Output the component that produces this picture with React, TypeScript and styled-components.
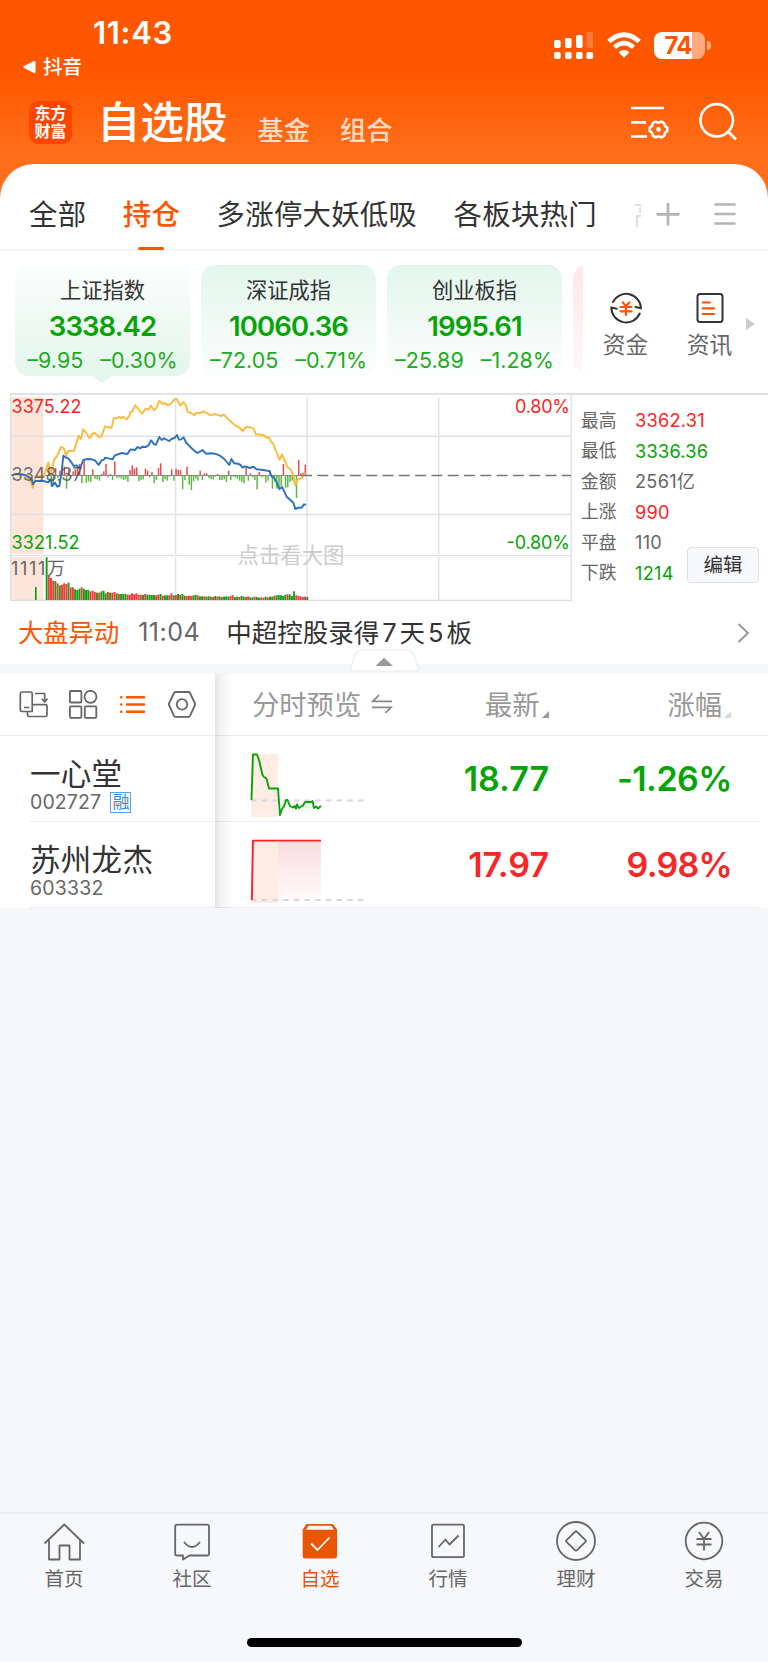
import React from "react";
import styled, { createGlobalStyle, css } from "styled-components";

const GREEN = "#07a307";
const RED = "#f82626";
const ORANGE = "#ff5500";

const GlobalStyle = createGlobalStyle`
  * { box-sizing: border-box; }
  body {
    margin: 0;
    background: #f6f7fa;
    font-family: Inter, "Noto Sans CJK SC", sans-serif;
    color: #333;
  }
  svg { display: block; flex: none; }
`;

type TextProps = {
  $size: number;
  $color?: string;
  $weight?: number;
  $spacing?: number;
  $line?: number;
};

const Text = styled.span<TextProps>`
  display: block;
  flex: none;
  white-space: nowrap;
  font-size: ${(p) => p.$size}px;
  line-height: ${(p) => p.$line ?? Math.round(p.$size * 1.3)}px;
  color: ${(p) => p.$color ?? "#333"};
  font-weight: ${(p) => p.$weight ?? 400};
  letter-spacing: ${(p) => p.$spacing ?? 0}px;
`;

const Screen = styled.div`
  display: flex;
  flex-direction: column;
  width: 768px;
  height: 1662px;
  overflow: hidden;
  background: #f6f7fa;
`;

/* ---------- header ---------- */

const Header = styled.header`
  height: 200px;
  flex: none;
  background: linear-gradient(#ff5500 0, #ff5700 75px, #ff6f1a 158px);
`;

const StatusBar = styled.div`
  display: flex;
  justify-content: space-between;
  height: 90px;
  padding: 0 58px 0 22px;
`;

const StatusLeft = styled.div`
  display: flex;
  flex-direction: column;
  padding-top: 13px;
`;

const ClockRow = styled.div`
  padding-left: 71px;
`;

const BackLink = styled.div`
  display: flex;
  align-items: center;
  gap: 7px;
  margin-top: -1px;
`;

const StatusIcons = styled.div`
  display: flex;
  align-items: flex-start;
  padding-top: 31px;
`;

const Battery = styled.div`
  display: flex;
  align-items: center;
  justify-content: center;
  width: 51px;
  height: 27px;
  padding-right: 3px;
  margin: 1px 0 0 12px;
  border-radius: 8px;
  background: linear-gradient(90deg, #fff 38px, #ffaa80 38px);
`;

const BatteryCap = styled.i`
  width: 4px;
  height: 9px;
  margin: 10px -1px 0 2px;
  border-radius: 0 4px 4px 0;
  background: #ffaa80;
`;

const TitleBar = styled.div`
  display: flex;
  align-items: flex-start;
  height: 73px;
  padding: 0 31px 0 29px;
`;

const Logo = styled.div`
  display: flex;
  flex-direction: column;
  align-items: center;
  width: 43px;
  height: 43px;
  margin-top: 11px;
  padding-top: 4px;
  border-radius: 9px;
  background: #ff4500;
`;

const Title = styled.h1`
  margin: 4px 0 0 25px;
  font-size: 43.5px;
  line-height: 56px;
  font-weight: 500;
  color: #fff;
  width: 160.5px;
  white-space: nowrap;
`;

const HeaderLink = styled.span`
  width: 82.5px;
  margin-top: 24px;
  font-size: 26.2px;
  line-height: 34px;
  font-weight: 500;
  color: #ffdcc8;
`;

const HeaderActions = styled.div`
  display: flex;
  gap: 28px;
  margin: 12px 0 0 auto;
`;

/* ---------- panel ---------- */

const Panel = styled.main`
  flex: none;
  margin-top: -36px;
  border-radius: 34px 34px 0 0;
  background: #fff;
`;

const Tabs = styled.nav`
  display: flex;
  height: 87px;
  padding: 31px 32px 0 29px;
  border-bottom: 2px solid #f5f5f6;
`;

const Tab = styled.div<{ $active?: boolean }>`
  display: flex;
  flex-direction: column;
  align-items: center;
  height: 56px;
  margin-right: 36.5px;
  font-size: 28.4px;
  line-height: 40px;
  letter-spacing: 0.25px;
  white-space: nowrap;
  color: #333;
  ${(p) =>
    p.$active &&
    css`
      color: ${ORANGE};
      font-weight: 500;
      &::after {
        content: "";
        width: 26px;
        height: 3px;
        margin-top: 12px;
        border-radius: 2px;
        background: ${ORANGE};
      }
    `}
`;

const TabPeek = styled.div`
  width: 8px;
  overflow: hidden;
  white-space: nowrap;
  font-size: 28.4px;
  line-height: 40px;
  color: #ddd;
`;

const TabTools = styled.div`
  display: flex;
  gap: 34px;
  margin: 7px 0 0 auto;
`;

const IndexStrip = styled.section`
  display: flex;
  height: 142px;
  padding: 14px 0 0 15px;
`;

const Cards = styled.div`
  display: flex;
  gap: 11px;
  width: 568px;
  height: 120px;
  overflow: hidden;
`;

const Card = styled.div<{ $tone: "selected" | "green" | "red" }>`
  position: relative;
  display: flex;
  flex-direction: column;
  align-items: center;
  flex: none;
  width: 175px;
  height: 111px;
  padding-top: 11px;
  border-radius: 14px;
  background: ${(p) =>
    ({
      selected: "linear-gradient(#fafefc, #e4f6ed)",
      green: "linear-gradient(#e3f6ed, #fcfefd)",
      red: "linear-gradient(#ffe6e8, #fffafa)",
    })[p.$tone]};
  ${(p) =>
    p.$tone === "selected" &&
    css`
      &::after {
        content: "";
        position: absolute;
        top: 111px;
        left: 78px;
        border: 9px solid transparent;
        border-top: 7px solid #e4f6ed;
        border-bottom: 0;
      }
    `}
`;

const CardValue = styled(Text)`
  margin-top: 5px;
`;

const Changes = styled.div`
  display: flex;
  gap: 17px;
  margin-top: 2px;
`;

const Shortcuts = styled.div`
  display: flex;
  padding: 26px 0 0 20px;
`;

const Shortcut = styled.div`
  display: flex;
  flex-direction: column;
  align-items: center;
  gap: 5px;
  width: 45px;
  margin-right: 39px;
`;

const ShortcutArrow = styled.i`
  margin: 27px 0 0 -25px;
  width: 0;
  height: 12px;
  border: 6px solid transparent;
  border-left: 9px solid #ccc;
  border-right: 0;
`;

const Overview = styled.section`
  display: flex;
  height: 208px;
  padding-left: 10px;
`;

const Stats = styled.div`
  display: flex;
  flex: 1;
  justify-content: space-between;
  padding: 10px 9px 0 9px;
  border-top: 2px solid #dcdde6;
`;

const StatRow = styled.div`
  display: flex;
  align-items: center;
  height: 30.5px;
`;

const StatLabel = styled(Text)`
  width: 54px;
`;

const EditButton = styled.button`
  align-self: flex-start;
  width: 72px;
  height: 36px;
  margin: 142px 0 0;
  padding: 0;
  border: 1px solid #dfe0e8;
  border-radius: 4px;
  background: #f7f8fb;
  font: 400 19.5px/32px Inter, "Noto Sans CJK SC", sans-serif;
  color: #333;
`;

const StatList = styled.div`
  width: 106px;
`;

const NewsRow = styled.section`
  display: flex;
  align-items: center;
  height: 63px;
  padding: 0 18px 0 18px;
`;

const NewsText = styled(Text)`
  flex: 1;
  word-spacing: -4.2px;
`;

const Divider = styled.div`
  position: relative;
  height: 9px;
  background: #f5f6fa;
`;

const CollapseTab = styled.div`
  position: absolute;
  left: 350px;
  top: -15px;
`;

/* ---------- watch list ---------- */

const Table = styled.section`
  display: grid;
  grid-template-columns: 215px 1fr;
`;

const PinnedColumn = styled.div``;

const DataColumn = styled.div`
  background: linear-gradient(90deg, #e6e6e6 0, #f3f3f3 6px, #fff 17px);
`;

const ToolCell = styled.div`
  display: flex;
  align-items: center;
  gap: 20px;
  height: 63px;
  padding: 2px 0 0 18px;
  border-bottom: 1px solid #ececec;
`;

const HeadCells = styled.div`
  display: flex;
  height: 63px;
  padding: 15px 0 0 37px;
  border-bottom: 1px solid rgba(0, 0, 0, 0.075);
`;

const HeadCell = styled.div<{ $width: number; $gap: number }>`
  display: flex;
  gap: ${(p) => p.$gap}px;
  width: ${(p) => p.$width}px;
`;

const SortMark = styled.i<{ $color: string }>`
  width: 0;
  height: 0;
  margin-top: 23px;
  border-left: 7px solid transparent;
  border-bottom: 7px solid ${(p) => p.$color};
`;

const StockCell = styled.div`
  height: 86px;
  margin-left: 30px;
  padding-top: 17px;
  border-bottom: 1px solid #ececec;
`;

const CodeLine = styled.div`
  display: flex;
  align-items: center;
  gap: 9px;
  height: 24px;
  margin-top: -4px;
`;

const MarginTag = styled.span`
  width: 21px;
  height: 21px;
  border: 1px solid #5da0ee;
  font-size: 17px;
  line-height: 18px;
  text-align: center;
  text-indent: 1px;
  color: #3c87e0;
`;

const QuoteCell = styled.div`
  display: flex;
  height: 86px;
  margin-right: 9px;
  padding-left: 35px;
  border-bottom: 1px solid rgba(0, 0, 0, 0.075);
`;

const Quote = styled(Text)<{ $width: number }>`
  width: ${(p) => p.$width}px;
  margin-top: 21px;
  text-align: right;
`;

/* ---------- bottom nav ---------- */

const BottomNav = styled.footer`
  display: flex;
  flex-direction: column;
  align-items: center;
  height: 150px;
  margin-top: auto;
  border-top: 2px solid #ebecee;
  background: #f7f8fb;
`;

const NavItems = styled.div`
  display: flex;
  width: 768px;
  height: 124px;
  padding-top: 7px;
`;

const NavItem = styled.div`
  display: flex;
  flex-direction: column;
  align-items: center;
  width: 128px;
`;

const HomeBar = styled.div`
  width: 275px;
  height: 9px;
  border-radius: 5px;
  background: #000;
`;

/* ---------- chart data ---------- */

const averageLine =
  "35,271 60,268 75,272 90,285 98,308 106,275 118,273 132,272 145,232 152,268 162,225 172,212 183,186 192,190 198,213 205,198 222,197 236,152 243,162 250,133 258,143 269,160 276,147 284,144 298,157 304,155 315,124 325,127 335,128 341,100 352,99 358,95 362,100 370,95 380,103 388,92 393,80 398,78 406,61 415,72 426,86 437,71 445,74 453,62 462,76 470,68 478,47 487,57 495,54 503,61 514,55 522,44 530,42 541,62 550,51 557,60 563,80 572,84 583,90 590,83 598,85 610,79 622,85 632,91 644,87 657,91 663,93 672,89 685,103 698,115 708,123 718,127 728,138 740,125 760,130 768,148 790,150 800,158 806,156 813,170 820,177 828,198 839,225 846,208 853,224 862,246 872,253 880,270 886,302 892,284 905,279 910,270 917,265";
const indexLine =
  "35,272 45,267 60,267 75,270 85,275 95,283 99,298 106,288 130,288 145,292 153,283 157,303 165,293 172,305 178,303 185,260 190,212 198,218 205,220 214,232 221,243 230,241 240,250 250,225 262,222 275,223 285,226 296,240 305,226 312,224 315,218 325,220 338,223 345,211 365,204 382,207 392,193 405,195 413,186 420,190 428,185 438,186 446,180 453,166 463,178 468,179 478,156 485,165 492,160 507,168 515,162 525,158 531,150 537,164 544,163 551,157 558,172 570,185 583,197 592,204 600,200 607,195 618,206 632,205 645,206 660,212 673,222 688,240 694,222 703,235 713,236 722,240 728,248 735,244 750,249 760,245 770,253 795,256 808,258 815,275 822,278 830,293 838,312 847,307 860,335 872,346 880,353 886,372 895,368 905,368 912,358 918,359";

/* Momentum bars: one value per two minutes, positive above the mid line. */
const momentum = [
  14, -34, -30, 22, -8, 14, 24, 26, -40, 18, -6, 12, 18, 24, 34, -24, 44, -22, -18, -20, 18,
  -10, -12, -16, 4, 12, 34, -6, 4, -14, 42, -8, -6, -10, -14, -12, -20, 16, 30, 20, 24, -18,
  -14, -12, 20, 14, -6, 10, -24, -14, 22, 36, -20, -12, -16, -4, 18, -16, 20, 16, 16, -42,
  -14, 26, -28, -44, -18, -10, -16, 14, -14, 6, 6, -8, -12, -12, -4, 4, -14, -14, -12, -20,
  14, -14, -4, -6, -10, -16, -20, -24, 26, -16, 6, -6, -14, -42, 10, -6, -4, -22, -16, 14,
  -40, -18, -40, -40, -36, 34, -38, -36, -20, -16, -24, -68, 46, 6, 8, 32,
];

const volumes = [
  128, 74, 66, 58, 57, 50, 44, 46, 50, 48, 52, 38, 38, 32, 30, 34, 38, 34, 30, 30, 26, 28, 24,
  22, 22, 26, 28, 20, 24, 22, 22, 24, 20, 18, 18, 18, 18, 16, 16, 20, 18, 20, 16, 16, 15, 18,
  16, 16, 15, 15, 14, 16, 18, 13, 14, 14, 14, 20, 14, 15, 18, 16, 18, 13, 12, 13, 12, 14, 16,
  14, 11, 11, 11, 10, 11, 10, 9, 12, 10, 11, 9, 10, 11, 10, 12, 14, 8, 10, 9, 12, 10, 9, 11, 8,
  8, 10, 9, 7, 8, 7, 10, 8, 10, 10, 13, 14, 15, 14, 12, 16, 17, 17, 12, 26, 14, 12, 11, 9, 10, 9,
];
const volumeColors =
  "GRRRGRGRRRGRRGGGRGGGRRRGRGGGRGRRGRGGGRRRRRRRGRGGGGRRGRGGRRGRGRGGRRRGGRGGRGGRRGRGRGGGRRGGRGGRRGGRGGRRGRGGRGGGGGRGGGRRRRR".split("");

const IndexChart = () => (
  <svg width="562" height="208" viewBox="10 393 562 208">
    <path d="M11 397H43.5V554H11zM11 557H43.5V600H11z" fill="#fde5d9" />
    <g stroke="#dfe1ea" strokeWidth="1.4" fill="none">
      <path d="M10 394H572" stroke="#d8d9e2" strokeWidth="1.6" />
      <path d="M10.7 394V601M571.2 394V601M10 436.2H571M10 514.5H571M175.6 397V554M307 397V554M438.8 397V554M175.6 557V600M307 557V600M438.8 557V600" />
      <path d="M10 555.6H571" />
      <path d="M10 600.4H572" stroke="#d8d9e2" />
    </g>
    <g fontFamily='Inter, "Noto Sans CJK SC", sans-serif' fontSize="18">
      <text x="237.500" y="563" fontSize="21.4" fill="#ccc">点击看大图</text>
      <text x="11.5" y="413" fill={RED} textLength="70">3375.22</text>
      <text x="11.5" y="549" fill={GREEN} textLength="68">3321.52</text>
      <text x="570" y="413" fill={RED} textAnchor="end" textLength="55">0.80%</text>
      <text x="570" y="549" fill={GREEN} textAnchor="end" textLength="63.5">-0.80%</text>
      <text x="11" y="575" fill="#666" textLength="54">1111万</text>
    </g>
    <g transform="translate(0 385) scale(0.33333)">
      {momentum.map((v, i) => (
        <rect
          key={i}
          x={145 + i * 6.57}
          y={v > 0 ? 271 - v : 271}
          width="4.4"
          height={Math.abs(v)}
          fill={v > 0 ? "#ee4747" : "#5cb83f"}
        />
      ))}
      <rect x="105" y="606" width="5" height="39" fill={GREEN} />
      {volumes.map((v, i) => (
        <rect
          key={i}
          x={137 + i * 6.57}
          y={645 - v}
          width="5.8"
          height={v}
          fill={volumeColors[i] === "R" ? "#f03c3c" : "#10a010"}
        />
      ))}
      <path d="M130 271.5H915" stroke="#888" strokeWidth="3" />
      <polyline points={averageLine} fill="none" stroke="#fbbb3c" strokeWidth="5.8" strokeLinejoin="round" />
      <polyline points={indexLine} fill="none" stroke="#2d70c4" strokeWidth="5.8" strokeLinejoin="round" />
    </g>
    <path d="M301 475.5H571" stroke="#777" strokeWidth="1.3" strokeDasharray="11 5.3" />
    <text x="11.5" y="481" fill="#555" fillOpacity="0.85" fontSize="18" textLength="71">3348.37</text>
  </svg>
);

const SparkDown = () => (
  <svg width="118" height="85" viewBox="250 736 118 85">
    <defs>
      <linearGradient id="sparkGreen" x1="0" x2="0" y1="0" y2="1">
        <stop offset="0" stopColor="#dff3e3" />
        <stop offset="1" stopColor="#fff" />
      </linearGradient>
    </defs>
    <path d="M251 754H278V817H251z" fill="#ffece4" />
    <path d="M280 812L286 800L295 808L309 803L321 807V816H280z" fill="url(#sparkGreen)" opacity=".6" />
    <path d="M251 800.5H364" stroke="#d6d7de" strokeWidth="1.8" strokeDasharray="5.5 5.2" />
    <path
      d="M251.500 800L253 754.500H257L259 760L262.500 775L264 777L266.500 778.500L269 788.500H278L280 815L282 809L284 806.500L286 800H287.500L290 806L293 807.500L294.500 806L296 808.500L297 804.500L299 808L303 805.500L305 802H311L312.500 801L314 808L316 806.500L318 808.500L321 806"
      fill="none"
      stroke={GREEN}
      strokeWidth="1.9"
      strokeLinejoin="round"
    />
  </svg>
);

const SparkUp = () => (
  <svg width="118" height="85" viewBox="250 822 118 85">
    <defs>
      <linearGradient id="sparkRed" x1="0" x2="0" y1="0" y2="1">
        <stop offset="0" stopColor="#fbdcdf" />
        <stop offset="1" stopColor="#fffafa" />
      </linearGradient>
    </defs>
    <path d="M251 841H278V903H251z" fill="#ffece4" />
    <path d="M278 841H321V900H278z" fill="url(#sparkRed)" />
    <path d="M251 900H364" stroke="#d6d7de" strokeWidth="1.8" strokeDasharray="5.5 5.2" />
    <path d="M251.800 900L253 840.600H321" fill="none" stroke={RED} strokeWidth="1.9" />
  </svg>
);

/* ---------- icons ---------- */

const SignalIcon = () => (
  <svg width="40" height="28" viewBox="553 31 40 28" fill="#fff">
    <rect x="553" y="40" width="6.600" height="8" rx="1.800" />
    <rect x="564" y="38" width="6.600" height="10" rx="1.800" />
    <rect x="575" y="35" width="6.600" height="13" rx="1.800" />
    <rect x="585.500" y="32" width="6.600" height="16" rx="1.800" opacity=".22" />
    <rect x="553" y="52" width="6.600" height="7" rx="1.800" />
    <rect x="564" y="52" width="6.600" height="7" rx="1.800" />
    <rect x="575" y="52" width="6.600" height="7" rx="1.800" />
    <rect x="585.500" y="52" width="6.600" height="7" rx="1.800" />
  </svg>
);

const WifiIcon = () => (
  <svg width="36" height="28" viewBox="605 31 36 28">
    <path d="M607.800 41.500Q623 28 638.200 41.500" fill="none" stroke="#fff" strokeWidth="5" />
    <path d="M613.500 47.200Q623 39 632.500 47.200" fill="none" stroke="#fff" strokeWidth="4.600" />
    <path d="M617.500 52.300Q623 47.500 628.500 52.300L623 57.800z" fill="#fff" />
  </svg>
);

const FilterGearIcon = () => (
  <svg width="40" height="38" viewBox="630 102 40 38" fill="none" stroke="#fff" strokeWidth="2.700">
    <path d="M631 108H664M631 122.300H646M631 136.500H647" />
    <path
      d="M655.500 121.500Q658.500 123.500 661.500 121.500L664.200 123.200Q664.300 126.500 667.300 127.600V131.200Q664.300 132.500 664.200 135.600L661.500 137.400Q658.500 135.400 655.500 137.400L652.800 135.600Q652.700 132.500 649.700 131.200V127.600Q652.700 126.500 652.800 123.200z"
      strokeWidth="2.500"
      strokeLinejoin="round"
    />
    <circle cx="658.500" cy="129.400" r="2.300" fill="#fff" stroke="none" />
  </svg>
);

const SearchIcon = () => (
  <svg width="39" height="39" viewBox="698 102 39 39" fill="none" stroke="#fff" strokeWidth="2.600">
    <circle cx="716.700" cy="120.300" r="16.200" />
    <path d="M728 131.500L736 139.500" />
  </svg>
);

const PlusIcon = () => (
  <svg width="24" height="24" viewBox="0 0 24 24" stroke="#b4b4b4" strokeWidth="2.700" strokeLinecap="round">
    <path d="M12 2V22.500M1.500 12.300H22.500" />
  </svg>
);

const MenuIcon = () => (
  <svg width="22" height="24" viewBox="0 0 22 24" stroke="#b4b4b4" strokeWidth="2.600" strokeLinecap="round">
    <path d="M1.500 2.500H20.500M1.500 12H20.500M1.500 21.500H20.500" />
  </svg>
);

const FundIcon = () => (
  <svg width="34" height="34" viewBox="608 291 34 34" fill="none" strokeLinecap="round" strokeLinejoin="round">
    <path d="M612 302A14.800 14.800 0 0 1 640 308.300L634.500 307M638.700 313.500A14.800 14.800 0 0 1 610.300 307.500L615.700 308.700" stroke="#333" strokeWidth="2" />
    <path d="M621.800 302.500L625 306.300L628.300 302.500M625 306.300V315M619.500 307H630.500M619.500 311.300H630.500" stroke={ORANGE} strokeWidth="2.200" />
  </svg>
);

const NewsIcon = () => (
  <svg width="34" height="34" viewBox="692.500 291 34 34" fill="none" strokeLinecap="round">
    <rect x="697" y="294" width="25" height="28" rx="2.500" stroke="#333" strokeWidth="2" />
    <path d="M702.300 302.500H709.500M702.300 308.300H713.500M702.300 314H713.500" stroke={ORANGE} strokeWidth="2.200" />
  </svg>
);

const RotateIcon = () => (
  <svg width="31" height="30" viewBox="18 690 31 30" fill="none" stroke="#666" strokeWidth="1.700" strokeLinejoin="round">
    <path d="M28 711.500H22Q20.300 711.500 20.300 710V693.500Q20.300 692 22 692H30.500Q32.200 692 32.200 693.500V711.500zM24 707.500H29.500M32.200 704.700H45.500Q47 704.700 47 706V715Q47 716.500 45.500 716.500H29Q27.500 716.500 27.500 715V711.500M35 693.500H44.700V701M41.800 698.800L44.700 702L47.500 698.800" />
  </svg>
);

const GridIcon = () => (
  <svg width="30" height="30" viewBox="69 690 30 30" fill="none" stroke="#666" strokeWidth="1.800">
    <rect x="69.900" y="691" width="11.500" height="11.500" rx="1" />
    <circle cx="90.500" cy="696.800" r="6" />
    <rect x="69.900" y="706.300" width="11.500" height="11.500" rx="1" />
    <rect x="84.800" y="706.300" width="11.500" height="11.500" rx="1" />
  </svg>
);

const ListIcon = () => (
  <svg width="28" height="30" viewBox="119 690 28 30" stroke={ORANGE} strokeWidth="2.600" strokeLinecap="round">
    <path d="M121.300 697.200h.1M121.300 704.500h.1M121.300 711.700h.1M127 697.200H144M127 704.500H144M127 711.700H144" />
  </svg>
);

const HexIcon = () => (
  <svg width="30" height="30" viewBox="167 690 30 30" fill="none" stroke="#666" strokeWidth="1.800" strokeLinejoin="round">
    <path d="M175.500 692H188.500Q189.500 692 190 693L195 703.500Q195.300 704.300 195 705L190 715.800Q189.500 716.800 188.500 716.800H175.500Q174.500 716.800 174 715.800L169 705Q168.700 704.300 169 703.500L174 693Q174.500 692 175.500 692z" />
    <circle cx="182" cy="704.400" r="5.200" />
  </svg>
);

const SwapIcon = () => (
  <svg width="22" height="34" viewBox="371 688 22 34" fill="none" stroke="#888" strokeWidth="1.800">
    <path d="M379 695L373 701.300H392M372 707.300H391L385.500 713" />
  </svg>
);

const navStroke = { fill: "none", stroke: "#666", strokeWidth: 1.8, strokeLinejoin: "round" as const };

const NavIcon = ({ kind }: { kind: string }) => (
  <svg width="42" height="42" viewBox="0 0 42 42" {...navStroke}>
    {kind === "home" && (
      <path d="M1.500 22.500L21.300 3.500L41 22.500M6 19V38.500H16.500V24.500H26.500V38.500H37V19" />
    )}
    {kind === "chat" && (
      <>
        <path d="M6 3.700H36Q38 3.700 38 5.500V33Q38 34.500 36 34.500H18.500L12 38.500V34.500H6Q4.200 34.500 4.200 33V5.500Q4.200 3.700 6 3.700z" />
        <path d="M13 21Q21 31 29 21" />
      </>
    )}
    {kind === "picks" && (
      <>
        <path d="M7.500 3H34L38 8.500V35Q38 37.500 35.500 37.500H6Q3.700 37.500 3.700 35V8.500z" fill="#ea5504" stroke="none" />
        <path d="M9.500 4.800H32.500L34.800 8.800H7z" fill="#fff8f4" stroke="none" />
        <path d="M12 22.500L18.500 29L30.500 16.500" stroke="#fff" />
      </>
    )}
    {kind === "market" && (
      <>
        <rect x="5" y="3.700" width="32" height="32.500" rx="1.500" />
        <path d="M11.500 26L18.500 18.500L22.500 23.500L31.500 14.500" />
      </>
    )}
    {kind === "wealth" && (
      <>
        <circle cx="21" cy="20" r="19" />
        <path d="M20 10.800Q21 9.800 22 10.800L30.500 19.200Q31.300 20 30.500 20.800L22 29.200Q21 30.200 20 29.200L11.500 20.800Q10.700 20 11.500 19.200z" />
      </>
    )}
    {kind === "trade" && (
      <>
        <circle cx="21" cy="20" r="18.300" />
        <path d="M16 11L21 18L26 11M21 18V29.500M13.500 18H28.500M13.500 23.500H28.500" />
      </>
    )}
  </svg>
);

/* ---------- data ---------- */

const indices = [
  { name: "上证指数", value: "3338.42", diff: "–9.95", pct: "–0.30%", tone: "selected" as const },
  { name: "深证成指", value: "10060.36", diff: "–72.05", pct: "–0.71%", tone: "green" as const },
  { name: "创业板指", value: "1995.61", diff: "–25.89", pct: "–1.28%", tone: "green" as const },
];

const stats = [
  ["最高", "3362.31", RED],
  ["最低", "3336.36", GREEN],
  ["金额", "2561亿", "#666"],
  ["上涨", "990", RED],
  ["平盘", "110", "#666"],
  ["下跌", "1214", GREEN],
];

const navItems = [
  ["home", "首页"],
  ["chat", "社区"],
  ["picks", "自选"],
  ["market", "行情"],
  ["wealth", "理财"],
  ["trade", "交易"],
];

export default function App() {
  return (
    <Screen>
      <GlobalStyle />
      <Header>
        <StatusBar>
          <StatusLeft>
            <ClockRow>
              <Text $size={31} $line={40} $weight={600} $color="#fff" $spacing={0.7}>11:43</Text>
            </ClockRow>
            <BackLink>
              <svg width="14" height="14" viewBox="0 0 14 14" fill="#fff">
                <path d="M12 1Q13.500 .5 13.500 2V12Q13.500 13.500 12 13L2 8Q.5 7 2 6z" />
              </svg>
              <Text $size={19.5} $line={30} $weight={500} $color="#fff">抖音</Text>
            </BackLink>
          </StatusLeft>
          <StatusIcons>
            <SignalIcon />
            <svg width="12" height="1" />
            <WifiIcon />
            <Battery>
              <Text $size={24} $line={27} $weight={700} $color={ORANGE} $spacing={-1}>74</Text>
            </Battery>
            <BatteryCap />
          </StatusIcons>
        </StatusBar>
        <TitleBar>
          <Logo>
            <Text $size={16} $line={17} $weight={700} $color="#fff">东方</Text>
            <Text $size={16} $line={18} $weight={700} $color="#fff">财富</Text>
          </Logo>
          <Title>自选股</Title>
          <HeaderLink>基金</HeaderLink>
          <HeaderLink>组合</HeaderLink>
          <HeaderActions>
            <FilterGearIcon />
            <SearchIcon />
          </HeaderActions>
        </TitleBar>
      </Header>

      <Panel>
        <Tabs>
          <Tab>全部</Tab>
          <Tab $active>持仓</Tab>
          <Tab>多涨停大妖低吸</Tab>
          <Tab>各板块热门</Tab>
          <TabPeek>高</TabPeek>
          <TabTools>
            <PlusIcon />
            <MenuIcon />
          </TabTools>
        </Tabs>

        <IndexStrip>
          <Cards>
            {indices.map((it) => (
              <Card key={it.name} $tone={it.tone}>
                <Text $size={21.3} $line={28}>{it.name}</Text>
                <CardValue $size={27.5} $line={34} $weight={600} $color={GREEN} $spacing={-0.9}>{it.value}</CardValue>
                <Changes>
                  <Text $size={21.5} $line={30} $color="#1fab1f">{it.diff}</Text>
                  <Text $size={21.5} $line={30} $color="#1fab1f">{it.pct}</Text>
                </Changes>
              </Card>
            ))}
            <Card $tone="red" />
          </Cards>
          <Shortcuts>
            <Shortcut>
              <FundIcon />
              <Text $size={22.7} $line={30} $color="#666">资金</Text>
            </Shortcut>
            <Shortcut>
              <NewsIcon />
              <Text $size={22.7} $line={30} $color="#666">资讯</Text>
            </Shortcut>
            <ShortcutArrow />
          </Shortcuts>
        </IndexStrip>

        <Overview>
          <IndexChart />
          <Stats>
            <StatList>
              {stats.map(([label, value, color]) => (
                <StatRow key={label}>
                  <StatLabel $size={17.8} $color="#666">{label}</StatLabel>
                  <Text $size={18.2} $spacing={0.25} $color={color}>{value}</Text>
                </StatRow>
              ))}
            </StatList>
            <EditButton>编辑</EditButton>
          </Stats>
        </Overview>

        <NewsRow>
          <Text $size={25.3} $color={ORANGE}>大盘异动</Text>
          <svg width="19" height="1" />
          <Text $size={25} $color="#666" $spacing={0.5}>11:04</Text>
          <svg width="26" height="1" />
          <NewsText $size={25.5}>中超控股录得 7 天 5 板</NewsText>
          <svg width="13" height="22" viewBox="0 0 13 22" fill="none" stroke="#999" strokeWidth="2">
            <path d="M1.500 2L11 11L1.500 20" />
          </svg>
        </NewsRow>
        <Divider>
          <CollapseTab>
            <svg width="69" height="23" viewBox="0 0 69 23">
              <path d="M.5 22L4 7Q6 .8 13 .8H55Q62 .8 64.500 7L68.500 22z" fill="#fff" stroke="#eeeff2" strokeWidth="1.300" />
              <path d="M25.500 17L34 8.800L43 17z" fill="#999" />
            </svg>
          </CollapseTab>
        </Divider>

        <Table>
          <PinnedColumn>
            <ToolCell>
              <RotateIcon />
              <GridIcon />
              <ListIcon />
              <HexIcon />
            </ToolCell>
            <StockCell>
              <Text $size={30.5} $line={41} $spacing={0.2}>一心堂</Text>
              <CodeLine>
                <Text $size={19.5} $color="#666" $spacing={0.1}>002727</Text>
                <MarginTag>融</MarginTag>
              </CodeLine>
            </StockCell>
            <StockCell>
              <Text $size={30.5} $line={41} $spacing={0.3}>苏州龙杰</Text>
              <CodeLine>
                <Text $size={19.5} $color="#666" $spacing={0.2}>603332</Text>
              </CodeLine>
            </StockCell>
          </PinnedColumn>
          <DataColumn>
            <HeadCells>
              <HeadCell $width={233} $gap={10}>
                <Text $size={27.3} $line={36} $color="#999">分时预览</Text>
                <SwapIcon />
              </HeadCell>
              <HeadCell $width={182.5} $gap={2}>
                <Text $size={27.3} $line={36} $color="#999">最新</Text>
                <SortMark $color="#999" />
              </HeadCell>
              <HeadCell $width={80} $gap={2}>
                <Text $size={27.3} $line={36} $color="#999">涨幅</Text>
                <SortMark $color="#d8d8d8" />
              </HeadCell>
            </HeadCells>
            <QuoteCell>
              <SparkDown />
              <Quote $size={34} $line={44} $weight={600} $color={GREEN} $width={181}>18.77</Quote>
              <Quote $size={34} $line={44} $weight={600} $color={GREEN} $spacing={-0.5} $width={183}>-1.26%</Quote>
            </QuoteCell>
            <QuoteCell>
              <SparkUp />
              <Quote $size={34} $line={44} $weight={600} $color={RED} $width={181}>17.97</Quote>
              <Quote $size={34} $line={44} $weight={600} $color={RED} $spacing={-0.7} $width={183}>9.98%</Quote>
            </QuoteCell>
          </DataColumn>
        </Table>
      </Panel>

      <BottomNav>
        <NavItems>
          {navItems.map(([kind, label]) => (
            <NavItem key={kind}>
              <NavIcon kind={kind} />
              <Text $size={19.5} $line={32} $color={kind === "picks" ? "#ea5504" : "#666"}>{label}</Text>
            </NavItem>
          ))}
        </NavItems>
        <HomeBar />
      </BottomNav>
    </Screen>
  );
}
